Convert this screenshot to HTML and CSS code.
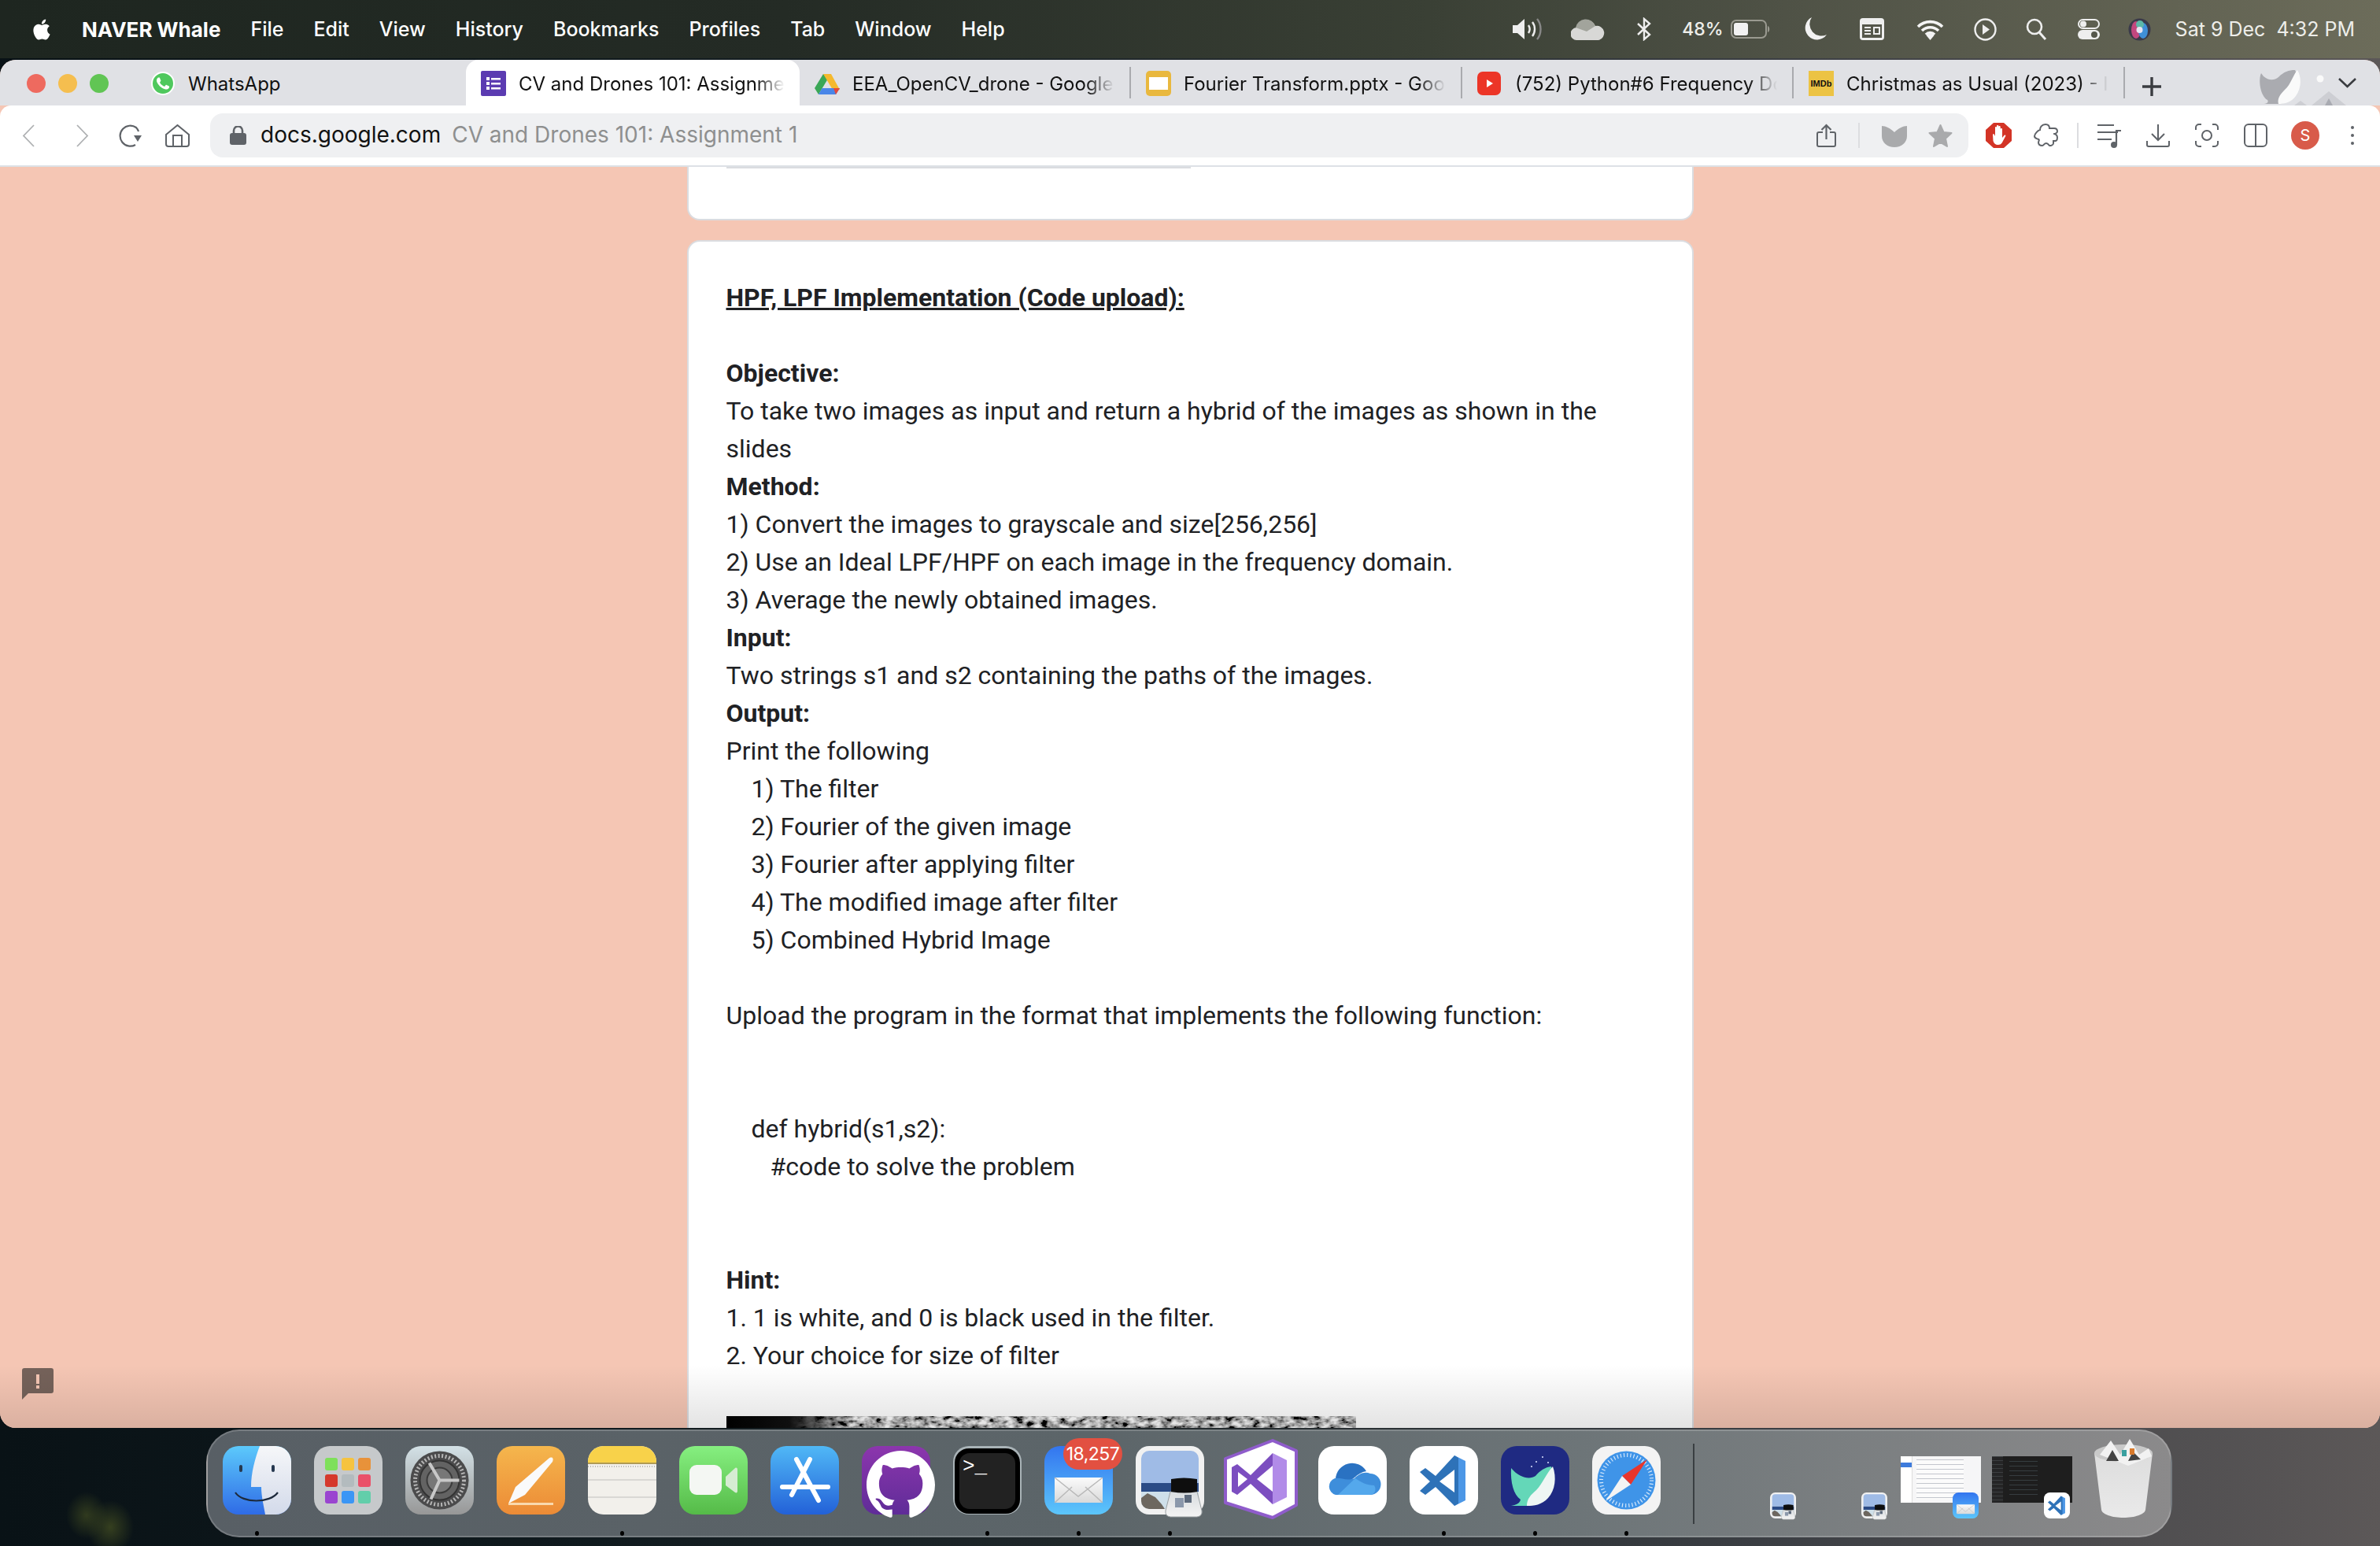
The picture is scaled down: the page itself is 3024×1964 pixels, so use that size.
FILE: index.html
```html
<!DOCTYPE html>
<html lang="en">
<head>
    <meta charset="UTF-8">
    <title>CV and Drones 101: Assignment 1</title>
    <link rel="stylesheet" href="styles.css">
</head>
<body>
    <!-- shared icons -->
    <svg class="sprite" xmlns="http://www.w3.org/2000/svg">
        <defs>
            <linearGradient id="gFinder" x1="0" y1="0" x2="0" y2="1"><stop offset="0" stop-color="#5cc9fb"/><stop offset="1" stop-color="#2f6be6"/></linearGradient>
            <linearGradient id="gFace" x1="0" y1="0" x2="0" y2="1"><stop offset="0" stop-color="#f6f7f9"/><stop offset="1" stop-color="#d3daea"/></linearGradient>
            <linearGradient id="gGear" x1="0" y1="0" x2="0" y2="1"><stop offset="0" stop-color="#d3e1e6"/><stop offset="1" stop-color="#979797"/></linearGradient>
            <linearGradient id="gPages" x1="0" y1="0" x2="0" y2="1"><stop offset="0" stop-color="#f5b64d"/><stop offset="1" stop-color="#ec8b36"/></linearGradient>
            <linearGradient id="gFace2" x1="0" y1="0" x2="0" y2="1"><stop offset="0" stop-color="#86ef80"/><stop offset="1" stop-color="#55bb48"/></linearGradient>
            <linearGradient id="gStore" x1="0" y1="0" x2="0" y2="1"><stop offset="0" stop-color="#50b8f6"/><stop offset="1" stop-color="#2361d8"/></linearGradient>
            <linearGradient id="gGit" x1="0" y1="0" x2="0" y2="1"><stop offset="0" stop-color="#8c36ad"/><stop offset="1" stop-color="#5f2c98"/></linearGradient>
            <linearGradient id="gMail" x1="0" y1="0" x2="0" y2="1"><stop offset="0" stop-color="#3375ef"/><stop offset="1" stop-color="#5cc6fb"/></linearGradient>
            <linearGradient id="gEnv" x1="0" y1="0" x2="0" y2="1"><stop offset="0" stop-color="#fbfbfb"/><stop offset="1" stop-color="#d9d9d9"/></linearGradient>
            <linearGradient id="gTrash" x1="0" y1="0" x2="0" y2="1"><stop offset="0" stop-color="#e4e4e4"/><stop offset="1" stop-color="#f2f2f2"/></linearGradient>
            <linearGradient id="gGlass" x1="0" y1="0" x2="0" y2="1"><stop offset="0" stop-color="#d8dcdf"/><stop offset="1" stop-color="#f4f4f4"/></linearGradient>
            <linearGradient id="gFade" x1="0" y1="0" x2="1" y2="0"><stop offset="0" stop-color="#000"/><stop offset=".1" stop-color="#111"/><stop offset=".2" stop-color="#000" stop-opacity="0"/></linearGradient>
            <filter id="grain" x="0" y="0" width="100%" height="100%">
                <feTurbulence type="fractalNoise" baseFrequency=".09 .16" numOctaves="3" seed="4"/>
                <feColorMatrix values="2.2 0 0 0 -.62 2.2 0 0 0 -.62 2.2 0 0 0 -.62 0 0 0 0 1"/>
            </filter>
            <symbol id="icMail" viewBox="0 0 87 87">
                <rect width="87" height="87" rx="20" fill="url(#gMail)"/>
                <path d="M13 40h61v29a3 3 0 0 1-3 3H16a3 3 0 0 1-3-3z" fill="url(#gEnv)"/>
                <path d="M13 40l30 24 31-24M13 72l22-20M74 72L52 52" fill="none" stroke="#b9b9b9" stroke-width="1.5"/>
            </symbol>
            <symbol id="icPreview" viewBox="0 0 87 87" overflow="visible">
                <rect width="87" height="87" rx="17" fill="#f1f1f1"/>
                <path d="M7 47V16A10 10 0 0 1 17 6h53a10 10 0 0 1 10 10v31z" fill="#9fbbe6"/>
                <path d="M7 47h73v12H7z" fill="#2b4b86"/>
                <path d="M7 58h73v12a10 10 0 0 1-10 10H17A10 10 0 0 1 7 70z" fill="#cfe0ea"/>
                <path d="M7 66l8-6 10 5 8 9 4 6H17A10 10 0 0 1 7 70z" fill="#6d675f"/>
                <path d="M44 58h34l6 24q1 7-6 8H44q-7-1-6-8z" fill="url(#gGlass)" stroke="#9aa0a3"/>
                <path d="M45 42q16-3 33 0v16q-16 3-33 0z" fill="#0e0e0e"/>
                <rect x="50" y="66" width="11" height="12" fill="#8b98ab"/>
                <rect x="62" y="62" width="9" height="10" fill="#5d6a7c"/>
            </symbol>
            <symbol id="icCode" viewBox="0 0 87 87">
                <rect width="87" height="87" rx="20" fill="#fff"/>
                <path d="M57 12l14 7v50l-14 7z" fill="#4c97e6"/>
                <path d="M57 12L33 38 20 28l-7 5 13 12-13 12 7 5 13-10 24 24 5-3V15z" fill="#2e72b8"/>
                <path d="M57 30v29L38 45z" fill="#fff"/>
            </symbol>
        </defs>
    </svg>

    <header class="menubar">
        <div class="menu-left">
            <svg class="apple" viewBox="0 0 24 24"><path fill="#fff" d="M12.152 6.896c-.948 0-2.415-1.078-3.96-1.04-2.04.027-3.91 1.183-4.961 3.014-2.117 3.675-.546 9.103 1.519 12.09 1.013 1.454 2.208 3.09 3.792 3.039 1.52-.065 2.09-.987 3.935-.987 1.831 0 2.35.987 3.96.948 1.637-.026 2.676-1.48 3.676-2.948 1.156-1.688 1.636-3.325 1.662-3.415-.039-.013-3.182-1.221-3.22-4.857-.026-3.04 2.48-4.494 2.597-4.559-1.429-2.09-3.623-2.324-4.39-2.376-2-.156-3.675 1.09-4.61 1.09zM15.53 3.83c.843-1.012 1.4-2.427 1.245-3.83-1.207.052-2.662.805-3.532 1.818-.78.896-1.454 2.338-1.273 3.714 1.338.104 2.715-.688 3.559-1.701"/></svg>
            <span class="app-name">NAVER Whale</span>
            <span>File</span>
            <span>Edit</span>
            <span>View</span>
            <span>History</span>
            <span>Bookmarks</span>
            <span>Profiles</span>
            <span>Tab</span>
            <span>Window</span>
            <span>Help</span>
        </div>
        <div class="menu-right">
            <svg class="st-speaker" width="39" height="28" viewBox="0 0 39 28"><path fill="#eee" d="M1 9h6l9-8v26l-9-8H1z"/><path fill="none" stroke="#eee" stroke-width="2.4" d="M21 9c2 3 2 7 0 10M26 5c4 5 4 13 0 18"/><path fill="none" stroke="#888" stroke-width="2.4" d="M32 1c6 7 6 19 0 26"/></svg>
            <svg class="st-cloud" width="43" height="27" viewBox="0 0 43 27"><path fill="#d8d8d6" d="M8 27a8 8 0 0 1-1-16A13 13 0 0 1 31 9a9 9 0 0 1 4 18z"/><path fill="#a2a49c" d="M6 11A13 13 0 0 1 31 9L20 16z"/></svg>
            <svg class="st-bt" width="20" height="30" viewBox="0 0 20 30"><path fill="none" stroke="#eee" stroke-width="2.4" d="M2 8l15 14-7 6V2l7 6L2 22"/></svg>
            <span class="st-batt-text">48%</span>
            <svg class="st-batt" width="51" height="24" viewBox="0 0 51 24"><rect x="1" y="1" width="44" height="22" rx="6" fill="none" stroke="#9a9a90" stroke-width="2"/><rect x="4" y="4" width="18" height="16" rx="3" fill="#f2f2f2"/><path d="M47 8c3 1 3 7 0 8z" fill="#9a9a90"/></svg>
            <svg class="st-moon" width="28" height="30" viewBox="0 0 28 30"><path fill="#f2f2f2" d="M9 0a15 15 0 0 0 19 22A15 15 0 1 1 9 0z"/></svg>
            <svg class="st-cal" width="31" height="28" viewBox="0 0 31 28"><rect width="31" height="28" rx="4" fill="#eee"/><rect x="3" y="8" width="25" height="17" fill="#55574b"/><path d="M6 12h8M6 16h8M6 20h8M18 12h7v8h-7z" stroke="#eee" stroke-width="2" fill="none"/></svg>
            <svg class="st-wifi" width="35" height="28" viewBox="0 0 35 28"><g fill="none" stroke="#f4f4f4" stroke-width="3.6"><path d="M2 11a22 22 0 0 1 31 0M7 16a15 15 0 0 1 21 0M12 21a7.5 7.5 0 0 1 11 0"/></g><path fill="#f4f4f4" d="M17.5 28l-5-6a7 7 0 0 1 10 0z"/></svg>
            <svg class="st-play" width="29" height="29" viewBox="0 0 29 29"><circle cx="14.5" cy="14.5" r="13" fill="none" stroke="#eee" stroke-width="2.4"/><path fill="#eee" d="M11 8l9 6.500-9 6.500z"/></svg>
            <svg class="st-search" width="27" height="28" viewBox="0 0 27 28"><circle cx="11" cy="11" r="9" fill="none" stroke="#eee" stroke-width="2.6"/><path stroke="#eee" stroke-width="3" d="M17 18l8 9"/></svg>
            <svg class="st-ctrl" width="28" height="26" viewBox="0 0 28 26"><rect x="1" y="1" width="26" height="11" rx="5.500" fill="none" stroke="#eee" stroke-width="2"/><circle cx="7" cy="6.500" r="4" fill="#eee"/><rect y="14" width="28" height="12" rx="6" fill="#eee"/><circle cx="21" cy="20" r="4" fill="#55574b"/></svg>
            <svg class="st-siri" width="29" height="29" viewBox="0 0 29 29"><circle cx="14.500" cy="14.500" r="14" fill="#3a3a4a"/><ellipse cx="10" cy="15" rx="6" ry="11" fill="#c2477e"/><ellipse cx="19" cy="16" rx="6" ry="10" fill="#3f8fd8"/><ellipse cx="15" cy="8" rx="5" ry="5" fill="#5cb8a8"/><circle cx="14.500" cy="15" r="4" fill="#e8e4f2"/></svg>
            <span class="clock">Sat 9 Dec&nbsp;&nbsp;4:32 PM</span>
        </div>
    </header>

    <section class="window">
        <div class="tabstrip">
            <div class="traffic">
                <span class="light red"></span>
                <span class="light amber"></span>
                <span class="light green"></span>
            </div>
            <div class="tab tab-first">
                <svg class="tab-icon" viewBox="0 0 24 24"><circle cx="12" cy="12" r="10.500" fill="#4fc85d" stroke="#fff" stroke-width="1.500"/><path fill="#fff" d="M17.472 14.382c-.297-.149-1.758-.867-2.03-.967-.273-.099-.471-.148-.67.15-.197.297-.767.966-.94 1.164-.173.199-.347.223-.644.075-.297-.15-1.255-.463-2.39-1.475-.883-.788-1.48-1.761-1.653-2.059-.173-.297-.018-.458.13-.606.134-.133.298-.347.446-.52.149-.174.198-.298.298-.497.099-.198.05-.371-.025-.52-.075-.149-.669-1.612-.916-2.207-.242-.579-.487-.5-.669-.51-.173-.008-.371-.01-.57-.01-.198 0-.52.074-.792.372-.272.297-1.04 1.016-1.04 2.479 0 1.462 1.065 2.875 1.213 3.074.149.198 2.096 3.2 5.077 4.487.709.306 1.262.489 1.694.625.712.227 1.36.195 1.871.118.571-.085 1.758-.719 2.006-1.413.248-.694.248-1.289.173-1.413-.074-.124-.272-.198-.57-.347"/></svg>
                <span class="tab-title">WhatsApp</span>
            </div>
            <div class="tab tab-active">
                <svg class="tab-icon" viewBox="0 0 32 32"><rect width="32" height="32" rx="2" fill="#5b3bb1"/><path fill="#fff" d="M7 8h4v4H7zM13 9h12v2.400H13zM7 14h4v4H7zM13 15h12v2.400H13zM7 20h4v4H7zM13 21h12v2.400H13z"/></svg>
                <span class="tab-title">CV and Drones 101: Assignme</span>
            </div>
            <div class="tab">
                <svg class="tab-icon" viewBox="0 0 32 32"><path fill="#3aa757" d="M11 4L0 22l5 8L17 10z"/><path fill="#f5b92e" d="M21 4H11l12 20h9z"/><path fill="#4a86e8" d="M5 30h22l5-8H9.500z"/><path fill="#e5493a" d="M27 30l5-8h-8z"/></svg>
                <span class="tab-title">EEA_OpenCV_drone - Google</span>
            </div>
            <span class="tab-sep"></span>
            <div class="tab">
                <svg class="tab-icon" viewBox="0 0 32 32"><rect width="32" height="32" rx="5" fill="#e9b83e"/><rect x="4" y="8" width="24" height="16" fill="#fff"/></svg>
                <span class="tab-title">Fourier Transform.pptx - Goog</span>
            </div>
            <span class="tab-sep"></span>
            <div class="tab">
                <svg class="tab-icon" viewBox="0 0 32 32"><rect y="1" width="30" height="30" rx="7" fill="#ec3527"/><path fill="#fff" d="M12 11l8 5-8 5z"/></svg>
                <span class="tab-title">(752) Python#6 Frequency Do</span>
            </div>
            <span class="tab-sep"></span>
            <div class="tab">
                <span class="imdb">IMDb</span>
                <span class="tab-title">Christmas as Usual (2023) - I</span>
            </div>
            <span class="tab-sep"></span>
            <svg class="new-tab" width="26" height="26" viewBox="0 0 26 26"><path stroke="#3a3c40" stroke-width="3.400" d="M13 1v24M1 13h24"/></svg>
            <svg class="whale-deco" width="100" height="58" viewBox="0 0 100 58">
                <path fill="#aaabb0" d="M12 17c-4 9-1 29 8 34 2 3-1 5-6 5h20c14-1 24-12 24-28 0-8-1-11-3-15-8 0-14 2-21 9-6 5-13 4-19-1z"/>
                <path fill="#fafafa" d="M58 13c5 8 6 22-2 33-6 8-14 10-22 10-2-7 3-13 8-18 8-7 10-18 16-25z"/>
                <circle cx="87" cy="24" r="4.500" fill="#fafafa"/>
                <path fill="#cdced3" d="M76 58l22-18 22 18z"/>
                <path fill="#cdced3" d="M54 58l8-6 8 6z"/>
                <path fill="#a9abb2" d="M93 58l5-9 5 9z"/>
            </svg>
            <svg class="tabs-menu" width="23" height="15" viewBox="0 0 23 15"><path fill="none" stroke="#3a3c40" stroke-width="2.600" d="M1 2l10.500 10L22 2"/></svg>
        </div>

        <nav class="toolbar">
            <svg class="tb-back" width="17" height="29" viewBox="0 0 17 29"><path fill="none" stroke="#aeb0b2" stroke-width="1.800" d="M15 1L2 14.500 15 28"/></svg>
            <svg class="tb-fwd" width="17" height="29" viewBox="0 0 17 29"><path fill="none" stroke="#aeb0b2" stroke-width="1.800" d="M2 1l13 13.500L2 28"/></svg>
            <svg class="tb-reload" width="32" height="30" viewBox="0 0 32 30"><path fill="none" stroke="#5f6368" stroke-width="2.200" d="M23 27a13 13 0 1 1 1-22 13 13 0 0 1 3 5"/><path fill="#5f6368" d="M21 15h10l-5 8z"/></svg>
            <svg class="tb-home" width="31" height="29" viewBox="0 0 31 29"><path fill="none" stroke="#5f6368" stroke-width="2" d="M1 13L15.500 1 30 13v12a3 3 0 0 1-3 3H4a3 3 0 0 1-3-3zM10 28V14h11v14"/></svg>
            <div class="omnibox">
                <svg class="lock" width="21" height="24" viewBox="0 0 21 24"><rect y="9" width="21" height="15" rx="3" fill="#5f6368"/><path fill="none" stroke="#5f6368" stroke-width="2.600" d="M5 10V6a5.500 5.500 0 0 1 11 0v4"/></svg>
                <span class="host">docs.google.com</span>
                <span class="page-title">CV and Drones 101: Assignment 1</span>
                <svg class="share" width="25" height="30" viewBox="0 0 25 30"><path fill="none" stroke="#5f6368" stroke-width="2" d="M8 11H3a2 2 0 0 0-2 2v14a2 2 0 0 0 2 2h19a2 2 0 0 0 2-2V13a2 2 0 0 0-2-2h-5"/><path fill="none" stroke="#5f6368" stroke-width="2.200" d="M12.500 20V2M6.500 8l6-6 6 6"/></svg>
                <span class="vsep"></span>
                <svg class="shield" width="32" height="30" viewBox="0 0 32 30"><path fill="#a9aaac" d="M0 3c5 0 11 3 16 8 5-5 11-8 16-8v13c0 8-7 14-16 14S0 24 0 16z"/></svg>
                <svg class="star" width="31" height="30" viewBox="0 0 31 30"><path fill="#a9aaac" stroke="#a9aaac" stroke-width="2" stroke-linejoin="round" d="M15.500 2l4 9 10 1-7.500 7 2 10-8.500-5-8.500 5 2-10L1.500 12l10-1z"/></svg>
            </div>
            <svg class="ext-block" width="33" height="32" viewBox="0 0 33 32"><path fill="#d33426" d="M10 0h13l10 9v14l-10 9H10L0 23V9z"/><path fill="#fff" d="M9 15c0-1 2-1 2 0l1 2V6c0-1.500 2-1.500 2 0v6V4c0-1.500 2.400-1.500 2.400 0v8V5c0-1.500 2.300-1.500 2.300 0v9V8c0-1.400 2.300-1.400 2.300 0v11l2.500-3c1-1 2.300 0 1.700 1l-3.200 6c-1.500 4-4 5-6.500 5-3 0-5-1.500-6-5z"/></svg>
            <svg class="ext-puzzle" width="32" height="30" viewBox="0 0 32 30"><path fill="none" stroke="#5f6368" stroke-width="2" d="M8 8c0-3 2-7 7-7 4 0 5 3 5 5h6c3 0 4 2 4 4s-3 3-4 3 4 0 4 5-3 4-5 4v3c0 2-3 3-5 3-1 0-1-3-4-3s-3 3-5 3c-3 0-5-1-5-4 0-2 2-3 0-4s-5-1-5-4 5-8 7-8z"/></svg>
            <span class="vsep tb-sep"></span>
            <svg class="tb-list" width="31" height="31" viewBox="0 0 31 31"><path stroke="#5f6368" stroke-width="2.200" d="M1 2h21M1 11h26M1 20h18"/><path fill="none" stroke="#5f6368" stroke-width="2.200" d="M25 27V9h6"/><circle cx="22" cy="27" r="4" fill="#5f6368"/></svg>
            <svg class="tb-down" width="30" height="30" viewBox="0 0 30 30"><path fill="none" stroke="#5f6368" stroke-width="2" d="M15 1v19M7 13l8 8 8-8M1 22v5a2 2 0 0 0 2 2h24a2 2 0 0 0 2-2v-5"/></svg>
            <svg class="tb-shot" width="30" height="30" viewBox="0 0 30 30"><path fill="none" stroke="#5f6368" stroke-width="2" d="M1 8V5a4 4 0 0 1 4-4h3M22 1h3a4 4 0 0 1 4 4v3M29 22v3a4 4 0 0 1-4 4h-3M8 29H5a4 4 0 0 1-4-4v-3"/><circle cx="15" cy="15" r="6" fill="none" stroke="#5f6368" stroke-width="2"/></svg>
            <svg class="tb-split" width="30" height="30" viewBox="0 0 30 30"><rect x="1" y="1" width="28" height="28" rx="5" fill="none" stroke="#5f6368" stroke-width="2"/><path stroke="#5f6368" stroke-width="2" d="M15 1v28"/></svg>
            <span class="avatar">S</span>
            <svg class="tb-dots" width="4" height="24" viewBox="0 0 4 24"><circle cx="2" cy="2" r="2" fill="#5f6368"/><circle cx="2" cy="12" r="2" fill="#5f6368"/><circle cx="2" cy="22" r="2" fill="#5f6368"/></svg>
        </nav>

        <main class="page">
            <section class="card card-prev">
                <div class="prev-rule"></div>
            </section>
            <section class="card card-task">
                <p class="line head">HPF, LPF Implementation (Code upload):</p>
                <p class="line blank"></p>
                <p class="line"><strong>Objective:</strong></p>
                <p class="line">To take two images as input and return a hybrid of the images as shown in the</p>
                <p class="line">slides</p>
                <p class="line"><strong>Method:</strong></p>
                <p class="line">1) Convert the images to grayscale and size[256,256]</p>
                <p class="line">2) Use an Ideal LPF/HPF on each image in the frequency domain.</p>
                <p class="line">3) Average the newly obtained images.</p>
                <p class="line"><strong>Input:</strong></p>
                <p class="line">Two strings s1 and s2 containing the paths of the images.</p>
                <p class="line"><strong>Output:</strong></p>
                <p class="line">Print the following</p>
                <p class="line indent">1) The filter</p>
                <p class="line indent">2) Fourier of the given image</p>
                <p class="line indent">3) Fourier after applying filter</p>
                <p class="line indent">4) The modified image after filter</p>
                <p class="line indent">5) Combined Hybrid Image</p>
                <p class="line blank"></p>
                <p class="line">Upload the program in the format that implements the following function:</p>
                <p class="line blank"></p>
                <p class="line blank"></p>
                <p class="line indent">def hybrid(s1,s2):</p>
                <p class="line indent-2">#code to solve the problem</p>
                <p class="line blank"></p>
                <p class="line blank"></p>
                <p class="line"><strong>Hint:</strong></p>
                <p class="line">1. 1 is white, and 0 is black used in the filter.</p>
                <p class="line">2. Your choice for size of filter</p>
                <svg class="task-img" width="800" height="200" viewBox="0 0 800 200"><rect width="800" height="200" filter="url(#grain)"/><rect width="800" height="200" fill="url(#gFade)"/></svg>
            </section>
        </main>

        <svg class="feedback" width="40" height="40" viewBox="0 0 40 40"><path fill="#75625a" d="M3 0h34a3 3 0 0 1 3 3v26a3 3 0 0 1-3 3H8l-8 8V3a3 3 0 0 1 3-3z"/><path fill="#f5c6b4" d="M18 8h4v12h-4zM18 22h4v4h-4z"/></svg>
    </section>

    <footer class="dock">
        <div class="dock-item">
            <svg viewBox="0 0 87 87"><rect width="87" height="87" rx="20" fill="url(#gFinder)"/><path fill="url(#gFace)" d="M47 0h20a20 20 0 0 1 20 20v47a20 20 0 0 1-20 20H54c-2-12-5-23-5-35H36c0-18 5-36 11-52z"/><rect x="21" y="24" width="4" height="9" rx="2" fill="#25384f"/><rect x="62" y="24" width="4" height="9" rx="2" fill="#25384f"/><path fill="none" stroke="#1d2a3c" stroke-width="2.200" d="M16 59c9 14 44 14 54 0"/></svg>
            <span class="dot"></span>
        </div>
        <div class="dock-item">
            <svg viewBox="0 0 87 87"><rect width="87" height="87" rx="20" fill="#c6c9cb"/><rect x="14" y="15" width="16" height="16" rx="3" fill="#7ee05a"/><rect x="35" y="15" width="16" height="16" rx="3" fill="#f6c33f"/><rect x="56" y="15" width="16" height="16" rx="3" fill="#e8923a"/><rect x="14" y="36" width="16" height="16" rx="3" fill="#d5392c"/><rect x="35" y="36" width="16" height="16" rx="3" fill="#b3bbbe"/><rect x="56" y="36" width="16" height="16" rx="3" fill="#ea5069"/><rect x="14" y="57" width="16" height="16" rx="3" fill="#9a45d0"/><rect x="35" y="57" width="16" height="16" rx="3" fill="#3b96f5"/><rect x="56" y="57" width="16" height="16" rx="3" fill="#62ceaa"/></svg>
        </div>
        <div class="dock-item">
            <svg viewBox="0 0 87 87"><rect width="87" height="87" rx="20" fill="url(#gGear)"/><circle cx="43.500" cy="43.500" r="37" fill="#4b4b4c"/><circle cx="43.500" cy="43.500" r="31" fill="none" stroke="#b5b5b5" stroke-width="5" stroke-dasharray="2 2.500"/><circle cx="43.500" cy="43.500" r="25" fill="#636363" stroke="#333" stroke-width="2"/><circle cx="43.500" cy="43.500" r="16" fill="#777" stroke="#3b3b3b" stroke-width="2"/><path stroke="#c8c8c8" stroke-width="4" d="M43.500 43.500l-13-22M43.500 43.500l25 0M43.500 43.500l-11 24"/></svg>
        </div>
        <div class="dock-item">
            <svg viewBox="0 0 87 87"><rect width="87" height="87" rx="20" fill="url(#gPages)"/><path fill="#fafafa" d="M15 73L24 52 66 16C70 13 73 15 71 20L36 62z"/><path fill="#f9d9ad" d="M15 72h57v3H15z"/></svg>
        </div>
        <div class="dock-item">
            <svg viewBox="0 0 87 87"><rect width="87" height="87" rx="20" fill="#f2f0eb"/><path fill="#f8d24a" d="M0 22V20A20 20 0 0 1 20 0h47a20 20 0 0 1 20 20v2z"/><path fill="#b09a54" d="M0 21h87v2H0z"/><path stroke="#b9b9b5" stroke-width="2" stroke-dasharray="1 2" d="M0 26h87"/><path stroke="#d9d8d4" stroke-width="2" d="M0 43h87M0 65h87"/></svg>
            <span class="dot"></span>
        </div>
        <div class="dock-item">
            <svg viewBox="0 0 87 87"><rect width="87" height="87" rx="20" fill="url(#gFace2)"/><rect x="13" y="24" width="41" height="38" rx="9" fill="#f4f7f3"/><path fill="#d6ecd2" d="M59 39l12-11c2-1 3 0 3 2v27c0 2-1 3-3 2L59 50z"/></svg>
        </div>
        <div class="dock-item">
            <svg viewBox="0 0 87 87"><rect width="87" height="87" rx="20" fill="url(#gStore)"/><g fill="none" stroke="#fff" stroke-width="6" stroke-linecap="round"><path d="M33 17l28 52M50 17L27 62"/><path d="M15 52h58"/></g></svg>
        </div>
        <div class="dock-item">
            <svg viewBox="0 0 87 87"><rect width="87" height="87" rx="20" fill="url(#gGit)"/><svg x="6" y="6" width="75" height="75" viewBox="0 0 16 16"><path fill="#fff" d="M8 0C3.58 0 0 3.58 0 8c0 3.54 2.29 6.53 5.47 7.59.4.07.55-.17.55-.38 0-.19-.01-.82-.01-1.49-2.01.37-2.53-.49-2.69-.94-.09-.23-.48-.94-.82-1.13-.28-.15-.68-.52-.01-.53.63-.01 1.08.58 1.23.82.72 1.21 1.87.87 2.33.66.07-.52.28-.87.51-1.07-1.78-.2-3.64-.89-3.64-3.95 0-.87.31-1.59.82-2.15-.08-.2-.36-1.02.08-2.12 0 0 .67-.21 2.2.82.64-.18 1.32-.27 2-.27.68 0 1.36.09 2 .27 1.53-1.04 2.2-.82 2.2-.82.44 1.1.16 1.92.08 2.12.51.56.82 1.27.82 2.15 0 3.07-1.87 3.75-3.65 3.95.29.25.54.73.54 1.48 0 1.07-.01 1.93-.01 2.2 0 .21.15.46.55.38A8.013 8.013 0 0016 8c0-4.42-3.58-8-8-8z"/></svg></svg>
        </div>
        <div class="dock-item">
            <svg viewBox="0 0 87 87"><rect width="87" height="87" rx="20" fill="#a9b3b7"/><rect x="2" y="3" width="83" height="83" rx="18" fill="#000"/><rect x="8" y="9" width="71" height="71" rx="13" fill="#222"/><text x="12" y="33" class="term-text">&gt;_</text></svg>
            <span class="dot"></span>
        </div>
        <div class="dock-item">
            <svg viewBox="0 0 87 87"><use href="#icMail"/></svg>
            <span class="badge">18,257</span>
            <span class="dot"></span>
        </div>
        <div class="dock-item">
            <svg viewBox="0 0 87 87"><use href="#icPreview"/></svg>
            <span class="dot"></span>
        </div>
        <div class="dock-item">
            <svg viewBox="0 0 87 87"><path fill="#fff" stroke="#8f5ccb" stroke-width="4" stroke-linejoin="round" d="M58 -7L88 6V75L58 91 -2 72V16z"/><path fill="#b18be8" d="M58 9l18 9v47l-18 9z"/><path fill="#7c4ec0" d="M58 9L30 37 13 23 6 27v31l7 4 17-14 28 26V58L38 42l20-17z"/><path fill="#fff" d="M14 33l12 9-12 10z"/></svg>
        </div>
        <div class="dock-item">
            <svg viewBox="0 0 87 87"><rect width="87" height="87" rx="20" fill="#fff"/><path fill="#2a72c2" d="M22 42a21 21 0 0 1 39-10c-6 1-11 4-15 8l-14 10z"/><path fill="#3e8edb" d="M22 62a11 11 0 0 1-1-21c9-1 15 4 25 0 6-6 13-9 20-6a13 13 0 0 1 0 27z"/><path fill="#54a8ec" d="M25 62l22-21c7 5 15 9 24 9 3 4 2 12-6 12z"/></svg>
        </div>
        <div class="dock-item">
            <svg viewBox="0 0 87 87"><use href="#icCode"/></svg>
            <span class="dot"></span>
        </div>
        <div class="dock-item">
            <svg viewBox="0 0 87 87"><rect width="87" height="87" rx="20" fill="#1f2a82"/><path fill="#64d7b8" d="M13 28c-1 18 3 34 12 40-1 5-6 7-12 8h20c16-1 30-10 33-30 1-7 0-13-2-20-8 1-14 5-20 12-7 5-20 3-31-10z"/><path fill="#eef6f4" d="M66 26c5 14 3 30-6 40-8 9-18 10-27 10 0-9 5-14 12-20 8-8 13-22 21-30z"/><g fill="#dfe4ff"><circle cx="45" cy="20" r="1"/><circle cx="53" cy="14" r="1"/><circle cx="60" cy="21" r="1"/><circle cx="39" cy="26" r="1"/></g></svg>
            <span class="dot"></span>
        </div>
        <div class="dock-item">
            <svg viewBox="0 0 87 87"><rect width="87" height="87" rx="20" fill="#f3f3f3"/><circle cx="43.500" cy="43.500" r="37" fill="#3f94e8"/><circle cx="43.500" cy="43.500" r="32" fill="none" stroke="#d6e8fa" stroke-width="5" stroke-dasharray="1.200 3"/><path fill="#e8352c" d="M70 17L38 38l11 11z"/><path fill="#f4f4f4" d="M17 70l32-21-11-11z"/></svg>
            <span class="dot"></span>
        </div>
        <span class="dock-sep"></span>
        <div class="min-slot first-slot">
            <svg class="min-badge" viewBox="0 0 87 87"><use href="#icPreview"/></svg>
        </div>
        <div class="min-slot">
            <svg class="min-badge" viewBox="0 0 87 87"><use href="#icPreview"/></svg>
        </div>
        <div class="min-slot">
            <div class="thumb thumb-mail">
                <div class="mail-list"></div>
                <div class="mail-body"></div>
            </div>
            <svg class="min-badge" viewBox="0 0 87 87"><use href="#icMail"/></svg>
        </div>
        <div class="min-slot">
            <div class="thumb thumb-code">
                <div class="code-tree"></div>
                <div class="code-body"></div>
            </div>
            <svg class="min-badge" viewBox="0 0 87 87"><use href="#icCode"/></svg>
        </div>
        <svg class="trash" width="76" height="100" viewBox="0 0 76 100"><path fill="url(#gTrash)" opacity=".92" d="M1 18h74l-9 72c-1 6-14 10-28 10s-27-4-28-10z"/><ellipse cx="38" cy="18" rx="37" ry="11" fill="#c9c9c9"/><path fill="#f2f2f2" d="M8 20L22 2l12 18 12-20 12 20 12-8 4 10-30 12z"/><path fill="#444" d="M16 28l8-14 8 14zM44 28l6-12 10 10z"/><path fill="#3aa0a0" d="M36 14h6v8h-6z"/><path fill="#d87a2c" d="M46 12h6v8h-6z"/></svg>
    </footer>
</body>
</html>
```

FILE: styles.css
```css
* {
    box-sizing: border-box;
}

html, body {
    margin: 0;
    padding: 0;
}

body {
    width: 3024px;
    height: 1964px;
    overflow: hidden;
    position: relative;
    font-family: Inter, "Liberation Sans", sans-serif;
    background:
        radial-gradient(ellipse 26px 30px at 110px 1925px, rgba(58,68,32,.8) 0, rgba(58,68,32,0) 100%),
        radial-gradient(ellipse 30px 34px at 140px 1940px, rgba(58,68,32,.9) 0, rgba(58,68,32,0) 100%),
        linear-gradient(90deg, #091216 0, #101a1e 25%, #1f272a 45%, #2c3236 60%, #3c3f44 75%, #5c5858 100%);
}

.sprite {
    position: absolute;
    width: 0;
    height: 0;
}

/* menu bar */
.menubar {
    height: 74px;
    margin-bottom: 2px;
    padding: 0 32px 0 40px;
    display: flex;
    justify-content: space-between;
    align-items: center;
    color: #fff;
    font-size: 25px;
    font-weight: 500;
    background: linear-gradient(90deg, #1e2620 0, #242b25 33%, #3a4035 60%, #4f5246 75%, #6c6c5a 100%);
}

.menu-left {
    display: flex;
    align-items: center;
    gap: 38px;
}

.apple {
    width: 26px;
    height: 31px;
}

.app-name {
    font-size: 26px;
    font-weight: 700;
}

.menu-right {
    display: flex;
    align-items: center;
    color: #eeeeea;
}

.st-speaker { margin-right: 36px; }
.st-cloud { margin-right: 40px; }
.st-bt { margin-right: 38px; }
.st-batt-text { margin-right: 9px; font-size: 23px; }
.st-batt { margin-right: 43px; }
.st-moon { margin-right: 42px; }
.st-cal { margin-right: 41px; }
.st-wifi { margin-right: 38px; }
.st-play { margin-right: 37px; }
.st-search { margin-right: 39px; }
.st-ctrl { margin-right: 36px; }
.st-siri { margin-right: 31px; }

.clock {
    font-weight: 400;
}

/* browser window */
.window {
    position: relative;
    height: 1738px;
    display: flex;
    flex-direction: column;
    border-radius: 20px;
    overflow: hidden;
    background: #f5c6b4;
}

.window::after {
    content: "";
    position: absolute;
    left: 0;
    right: 0;
    bottom: 0;
    height: 80px;
    background: linear-gradient(180deg, rgba(0,0,0,0), rgba(0,0,0,.11));
}

.tabstrip {
    height: 58px;
    flex: none;
    display: flex;
    align-items: center;
    background: #e0e1e5;
    font-size: 24px;
    color: #111;
}

.traffic {
    width: 166px;
    padding: 2px 0 0 34px;
    display: flex;
    gap: 16px;
}

.light {
    width: 24px;
    height: 24px;
    border-radius: 50%;
}

.red { background: #ee6a5f; }
.amber { background: #f5be4f; }
.green { background: #61c554; }

.tab {
    width: 419px;
    height: 58px;
    padding: 2px 19px 0;
    display: flex;
    align-items: center;
    gap: 16px;
    flex: none;
}

.tab-first {
    width: 426px;
    padding-left: 25px;
}

.tab-active {
    width: 424px;
    background: #fff;
    border-radius: 16px 16px 0 0;
}

.tab-icon {
    width: 32px;
    height: 32px;
    flex: none;
}

.tab-title {
    flex: 1;
    min-width: 0;
    white-space: nowrap;
    -webkit-mask-image: linear-gradient(90deg, #000 calc(100% - 36px), transparent);
    mask-image: linear-gradient(90deg, #000 calc(100% - 36px), transparent);
}

.tab-first .tab-title {
    -webkit-mask-image: none;
    mask-image: none;
}

.tab-sep {
    width: 2px;
    height: 40px;
    flex: none;
    background: #a9aaae;
}

.imdb {
    width: 32px;
    height: 32px;
    flex: none;
    display: flex;
    align-items: center;
    justify-content: center;
    background: #ecc344;
    color: #111;
    font-family: "Liberation Sans", sans-serif;
    font-size: 11px;
    font-weight: 700;
}

.new-tab {
    margin-left: 21px;
    margin-top: 10px;
    flex: none;
}

.whale-deco {
    margin-left: 114px;
    flex: none;
    overflow: visible;
}

.tabs-menu {
    margin-left: 10px;
    flex: none;
}

/* toolbar */
.toolbar {
    position: relative;
    height: 78px;
    flex: none;
    padding-left: 28px;
    display: flex;
    align-items: center;
    background: #fff;
    border-bottom: 2px solid #dde1e6;
    border-radius: 14px 14px 0 0;
}

.tb-back { margin-right: 51px; }
.tb-fwd { margin-right: 36px; }
.tb-reload { margin-right: 29px; }
.tb-home { margin-right: 26px; }

.omnibox {
    width: 2234px;
    height: 56px;
    padding: 0 20px 0 25px;
    display: flex;
    align-items: center;
    background: #eff0f2;
    border-radius: 16px;
    font-size: 28px;
}

.lock {
    margin-right: 18px;
}

.host {
    color: #111;
    margin: 0 14px 2px 0;
}

.page-title {
    color: #8e8f8f;
    flex: 1;
    margin-bottom: 2px;
}

.vsep {
    width: 2px;
    height: 32px;
    margin: 0 28px;
    background: #dcdde0;
}

.star {
    margin-left: 27px;
}

.ext-block { margin-left: 22px; }
.ext-puzzle { margin-left: 28px; }
.tb-sep { margin: 0 23px; }
.tb-down { margin-left: 32px; }
.tb-shot { margin-left: 32px; }
.tb-split { margin-left: 32px; }

.avatar {
    width: 36px;
    height: 36px;
    margin-left: 30px;
    border-radius: 50%;
    display: flex;
    align-items: center;
    justify-content: center;
    background: #d85b4a;
    color: #fff;
    font-size: 20px;
}

.tb-dots {
    margin-left: 40px;
}

/* page content */
.page {
    flex: 1;
    min-height: 0;
    overflow: hidden;
    display: flex;
    flex-direction: column;
    align-items: center;
    background: #f5c6b4;
}

.card {
    width: 1279px;
    flex: none;
    background: #fff;
    border: 2px solid #dadce0;
}

.card-prev {
    height: 68px;
    margin-bottom: 25px;
    padding: 0 48px;
    border-top: 0;
    border-radius: 0 0 16px 16px;
}

.prev-rule {
    width: 590px;
    height: 2px;
    background: #dadce0;
}

.card-task {
    padding: 47px 48px 0;
    border-radius: 16px 16px 0 0;
    font-family: Roboto, "Liberation Sans", sans-serif;
    font-size: 32px;
    color: #202124;
}

.line {
    margin: 0;
    height: 48px;
    line-height: 48px;
    white-space: nowrap;
}

.head {
    font-weight: 700;
    text-decoration: underline;
}

.indent {
    padding-left: 32px;
}

.indent-2 {
    padding-left: 56px;
}

.task-img {
    display: block;
    margin-top: 53px;
}

.feedback {
    position: absolute;
    left: 28px;
    top: 1662px;
}

/* dock */
.dock {
    width: 2498px;
    height: 137px;
    margin: 2px 0 0 262px;
    padding: 19px 0 0 19px;
    display: flex;
    align-items: flex-start;
    gap: 29px;
    border: 2px solid rgba(255,255,255,.18);
    border-radius: 42px;
    background: linear-gradient(90deg, #585f65 0, #5c6569 45%, #6d7578 70%, #8b8a8b 100%);
}

.dock-item {
    position: relative;
    width: 87px;
    height: 87px;
    flex: none;
}

.dock-item svg {
    display: block;
    width: 87px;
    height: 87px;
    overflow: visible;
}

.dot {
    display: block;
    width: 5px;
    height: 6px;
    margin: 21px auto 0;
    border-radius: 50%;
    background: #000;
}

.badge {
    position: absolute;
    left: 24px;
    top: -10px;
    width: 75px;
    height: 40px;
    border-radius: 20px;
    background: #e25041;
    color: #fff;
    font-size: 23px;
    line-height: 40px;
    text-align: center;
    letter-spacing: -0.5px;
}

.term-text {
    font-family: "Liberation Mono", monospace;
    font-size: 26px;
    fill: #fff;
}

.dock-sep {
    width: 2px;
    height: 102px;
    margin: -3px 0 0 12px;
    flex: none;
    background: #3a3f42;
}

.min-slot {
    position: relative;
    width: 102px;
    height: 92px;
    flex: none;
    margin-left: -15px;
}

.first-slot {
    margin-left: 1px;
}

.min-badge {
    position: absolute;
    right: 3px;
    bottom: 0;
    width: 33px;
    height: 33px;
    overflow: visible;
}

.thumb {
    width: 102px;
    height: 59px;
    margin-top: 13px;
    display: flex;
}

.thumb-mail {
    background: #f6f6f7;
}

.mail-list {
    width: 15px;
    background:
        linear-gradient(180deg, #fff 0, #fff 8px, #3d7bdc 8px, #3d7bdc 14px, #fff 14px),
        #fff;
    border-right: 1px solid #ddd;
}

.mail-body {
    flex: 1;
    margin: 4px 22px 4px 5px;
    background: repeating-linear-gradient(180deg, #c3c6cd 0, #c3c6cd 1px, #fbfbfb 1px, #fbfbfb 6px);
}

.thumb-code {
    background: #1e1e1e;
}

.code-tree {
    width: 14px;
    background: repeating-linear-gradient(180deg, #3c3f41 0, #3c3f41 1px, #252526 1px, #252526 5px);
}

.code-body {
    flex: 1;
    margin: 6px 44px 6px 8px;
    background: repeating-linear-gradient(180deg, #363d40 0, #363d40 1px, #1e1e1e 1px, #1e1e1e 6px);
}

.trash {
    flex: none;
    margin: -9px 0 0 -2px;
}
```
